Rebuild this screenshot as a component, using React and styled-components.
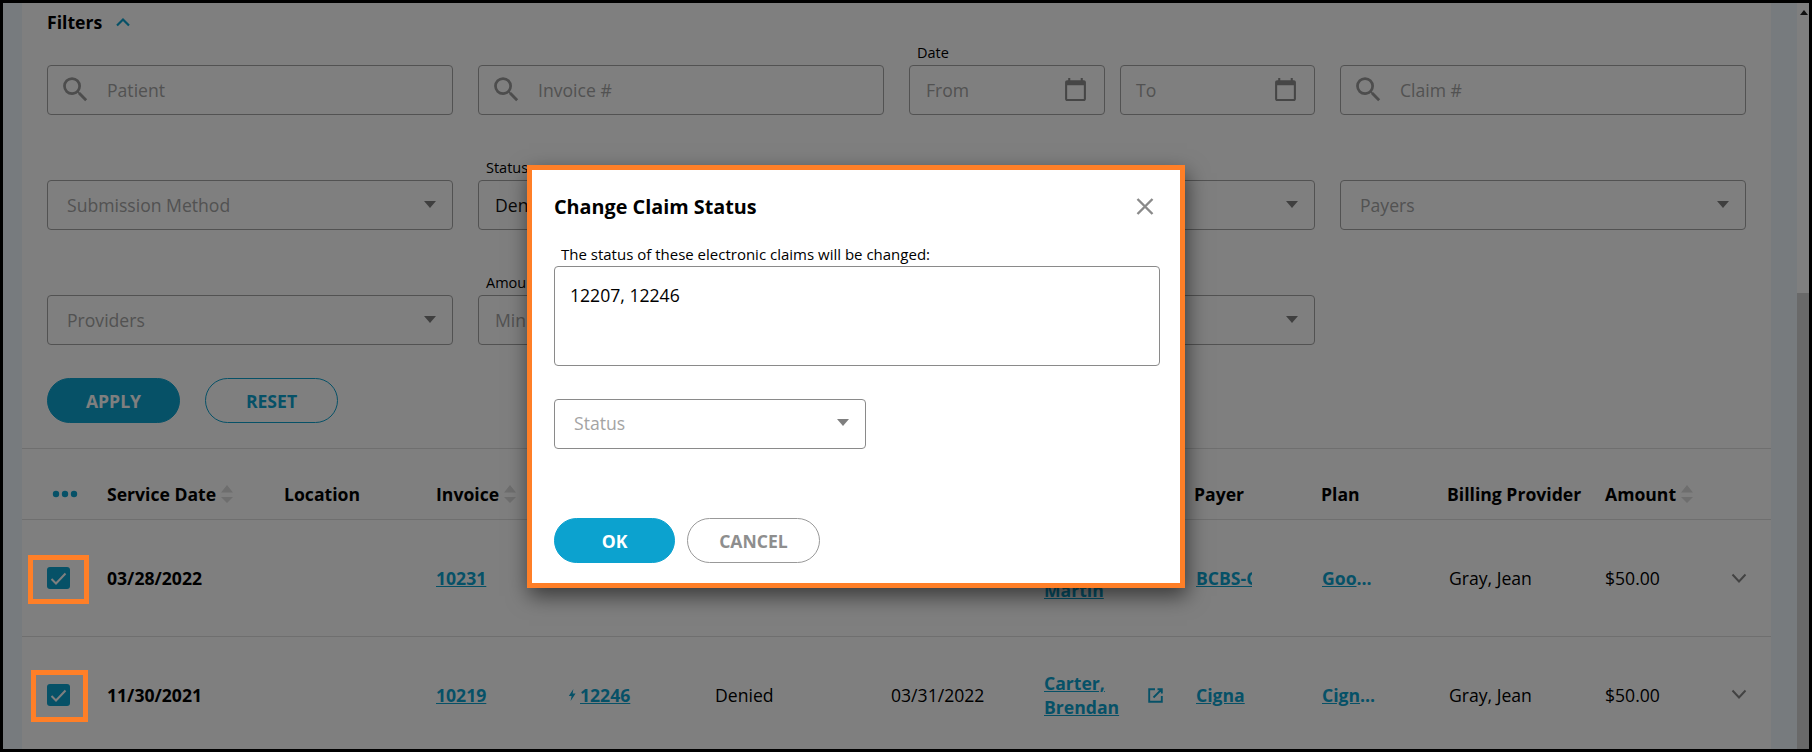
import React from 'react'
import styled, { createGlobalStyle } from 'styled-components'

const GlobalStyle = createGlobalStyle`
  html, body {
    margin: 0;
    padding: 0;
    background: #000;
  }
  * {
    box-sizing: border-box;
  }
`

const TEAL = '#0ca2cf'
const FONT = '"Open Sans", "Noto Sans", sans-serif'

const Frame = styled.div`
  position: relative;
  width: 1812px;
  height: 752px;
  border: 3px solid #000;
  overflow: hidden;
  display: flex;
  background: #fff;
  font-family: ${FONT};
  font-size: 17.6px;
  color: #000;
`

const SideStrip = styled.div`
  flex: 0 0 ${p => p.$width}px;
  background: #eef6fc;
`

const Main = styled.main`
  flex: 0 0 1749px;
  overflow: hidden;
`

const Scrollbar = styled.div`
  flex: 0 0 12px;
  display: flex;
  flex-direction: column;
  padding-top: 7px;
`

const ScrollArrow = styled.span`
  align-self: flex-end;
  margin-right: 1px;
  width: 0;
  height: 0;
  border-left: 4px solid transparent;
  border-right: 4px solid transparent;
  border-bottom: 5px solid #222;
`

const ScrollThumb = styled.div`
  margin-top: auto;
  height: 456px;
  background: #d2d2d2;
`

const FilterHead = styled.div`
  height: 41px;
  padding: 7px 0 0 25px;
  display: flex;
  align-items: flex-start;
  gap: 12px;
  line-height: 24px;
  font-weight: 700;
`

const FilterChevron = styled.svg`
  width: 18px;
  height: 12px;
  margin-top: 6px;
  fill: none;
  stroke: ${TEAL};
  stroke-width: 2.2;
`

const FilterGrid = styled.div`
  display: grid;
  grid-template-columns: repeat(4, 406px);
  column-gap: 25px;
  row-gap: 44px;
  padding-left: 25px;
`

const Cell = styled.div`
  min-height: 71px;
  display: flex;
  flex-direction: column;
  justify-content: flex-end;
`

const FieldLabel = styled.label`
  display: block;
  height: 18px;
  margin: 0 0 3px 8px;
  line-height: 18px;
  font-size: 14.5px;
`

const Pair = styled.div`
  display: grid;
  grid-template-columns: 196px 195px;
  column-gap: 15px;
`

const Field = styled.div`
  height: 50px;
  width: ${p => (p.$width ? `${p.$width}px` : 'auto')};
  display: flex;
  align-items: center;
  padding: 0 ${p => p.$right || 15}px ${p => p.$bottom || 1}px ${p => p.$left || 19}px;
  border: 1px solid ${p => p.$line || '#a4a4a4'};
  border-radius: 4px;
  background: #fff;
  color: ${p => (p.$filled ? '#111' : '#a4a4a4')};
`

const FieldText = styled.span`
  flex: 1;
  white-space: nowrap;
`

const SearchIcon = styled.svg`
  width: 33px;
  height: 33px;
  margin-right: 15px;
  fill: #9a9a9a;
`

const CalendarIcon = styled.svg`
  width: 25px;
  height: 25px;
  fill: #8c8c8c;
`

const Caret = styled.span`
  width: 0;
  height: 0;
  margin-right: 1px;
  border-left: 6px solid transparent;
  border-right: 6px solid transparent;
  border-top: 7px solid #7f7f7f;
`

const ButtonRow = styled.div`
  display: flex;
  gap: ${p => p.$gap}px;
  padding-left: ${p => p.$inset}px;
  margin-top: ${p => p.$top}px;
`

const Pill = styled.button`
  width: ${p => p.$width}px;
  height: 45px;
  padding: 0;
  border-radius: 23px;
  border: 1px solid ${p => p.$line};
  background: ${p => p.$fill || '#fff'};
  color: ${p => p.$ink};
  font-family: ${FONT};
  font-size: 17.6px;
  font-weight: 700;
`

const Rule = styled.div`
  height: 1px;
  margin-top: 25px;
  background: #dedede;
`

const columns = '60px 177px 152px 132px 147px 176px 153px 150px 127px 126px 158px 126px 40px'

const HeaderRow = styled.div`
  display: grid;
  grid-template-columns: ${columns};
  align-items: center;
  height: 71px;
  padding: 19px 0 0 25px;
  border-bottom: 1px solid #dedede;
  font-weight: 700;
`

const HeadCell = styled.div`
  display: flex;
  align-items: center;
  gap: 5px;
  white-space: nowrap;
`

const Dots = styled.svg`
  width: 26px;
  height: 8px;
  margin-left: 5px;
  fill: ${TEAL};
`

const SortIcon = styled.svg`
  width: 12px;
  height: 18px;
  fill: #dcdcdc;
`

const Row = styled.div`
  display: grid;
  grid-template-columns: ${columns};
  align-items: center;
  height: 117px;
  padding-left: 25px;
  border-bottom: 1px solid #dedede;
`

const CheckCell = styled.div`
  position: relative;
  width: 23px;
  height: 22px;
`

const Checkbox = styled.div`
  width: 23px;
  height: 22px;
  border-radius: 3px;
  background: ${TEAL};
  display: flex;
  align-items: center;
  justify-content: center;
`

const CheckMark = styled.svg`
  width: 17px;
  height: 13px;
  fill: none;
  stroke: #fff;
  stroke-width: 2;
`

// orange marks from the annotated screenshot, they sit above the dimmed layer
const Marker = styled.span`
  position: absolute;
  z-index: 20;
  left: ${p => p.$left}px;
  top: ${p => p.$top}px;
  width: ${p => p.$width}px;
  height: ${p => p.$height}px;
  border: 5px solid #ff7f27;
`

const DateText = styled.span`
  font-weight: 700;
`

const Inset = styled.div`
  padding-left: ${p => p.$left}px;
`

const TableLink = styled.a`
  display: ${p => (p.$clip ? 'inline-block' : 'inline')};
  max-width: ${p => (p.$clip ? `${p.$clip}px` : 'none')};
  overflow: ${p => (p.$clip ? 'hidden' : 'visible')};
  text-overflow: ${p => (p.$ellipsis ? 'ellipsis' : 'clip')};
  white-space: ${p => (p.$clip ? 'nowrap' : 'normal')};
  vertical-align: bottom;
  color: ${TEAL};
  font-weight: 700;
  text-decoration: underline;
`

const ClaimCell = styled.div`
  display: flex;
  align-items: center;
  gap: 4px;
`

const BoltIcon = styled.svg`
  width: 8px;
  height: 12px;
  fill: ${TEAL};
`

const NameCell = styled.div`
  display: flex;
  align-items: center;
  line-height: 24px;
`

const NameText = styled.div`
  width: 104px;
`

const ExternalIcon = styled.svg`
  width: 15px;
  height: 15px;
  fill: none;
  stroke: ${TEAL};
  stroke-width: 1.9;
`

const Chevron = styled.svg`
  width: 16px;
  height: 10px;
  margin-top: ${p => p.$nudge || 0}px;
  fill: none;
  stroke: #868686;
  stroke-width: 2;
`

const Dimmer = styled.div`
  position: absolute;
  inset: 0;
  z-index: 10;
  background: rgba(0, 0, 0, 0.5);
  padding: 162px 0 0 524px;
`

const Modal = styled.section`
  width: 658px;
  height: 423px;
  padding: 23px 20px 0 22px;
  border: 5px solid #ff7f27;
  background: #fff;
  box-shadow: 2px 8px 20px rgba(0, 0, 0, 0.55);
`

const ModalHead = styled.header`
  display: flex;
  align-items: center;
  justify-content: space-between;
  height: 26px;
  padding-right: 6px;
`

const ModalTitle = styled.h2`
  margin: 0;
  font-size: 19.8px;
  font-weight: 700;
`

const CloseIcon = styled.svg`
  width: 18px;
  height: 17px;
  fill: none;
  stroke: #8a8a8a;
  stroke-width: 2.4;
`

const ModalLabel = styled.div`
  height: 18px;
  margin: 26px 0 3px 7px;
  line-height: 18px;
  font-size: 15px;
`

const ClaimList = styled.div`
  height: 100px;
  padding: 16px 15px;
  border: 1px solid #8a8a8a;
  border-radius: 4px;
  line-height: 24px;
`

const StatusWrap = styled.div`
  margin-top: 33px;
`

const Search = () => (
  <SearchIcon viewBox="0 0 24 24">
    <path d="M15.5 14h-.79l-.28-.27A6.47 6.47 0 0 0 16 9.5 6.5 6.5 0 1 0 9.5 16c1.61 0 3.09-.59 4.23-1.57l.27.28v.79l5 4.99L20.49 19l-4.99-5zm-6 0C7.01 14 5 11.99 5 9.5S7.01 5 9.5 5 14 7.01 14 9.5 11.99 14 9.5 14z" />
  </SearchIcon>
)

const Calendar = () => (
  <CalendarIcon viewBox="0 0 24 24">
    <path d="M20 3h-1V1h-2v2H7V1H5v2H4c-1.1 0-2 .9-2 2v16c0 1.1.9 2 2 2h16c1.1 0 2-.9 2-2V5c0-1.1-.9-2-2-2zm0 18H4V8h16v13z" />
  </CalendarIcon>
)

const Sort = () => (
  <SortIcon viewBox="0 0 12 18">
    <path d="M6 0l6 7.5H0zM0 12h12l-6 6z" />
  </SortIcon>
)

const SearchField = ({ text }) => (
  <Cell>
    <Field $left={11}>
      <Search />
      <FieldText>{text}</FieldText>
    </Field>
  </Cell>
)

const SelectField = ({ text, label, filled }) => (
  <Cell>
    {label && <FieldLabel>{label}</FieldLabel>}
    <Field $filled={filled} $left={filled ? 16 : 19}>
      <FieldText>{text}</FieldText>
      <Caret />
    </Field>
  </Cell>
)

const rows = [
  {
    date: '03/28/2022',
    invoice: '10231',
    claim: '12207',
    name: [' ', 'Martin'],
    payer: 'BCBS-CA',
    plan: 'Good Health',
    marker: { left: -19, top: -12, width: 61, height: 49 },
  },
  {
    date: '11/30/2021',
    invoice: '10219',
    claim: '12246',
    sent: '03/31/2022',
    name: ['Carter,', 'Brendan'],
    payer: 'Cigna',
    plan: 'Cigna PPO',
    external: true,
    nudge: -2,
    marker: { left: -16, top: -14, width: 57, height: 52 },
  },
]

const App = () => (
  <>
    <GlobalStyle />
    <Frame>
      <SideStrip $width={19} />
      <Main>
        <FilterHead>
          Filters
          <FilterChevron viewBox="0 0 18 12">
            <path d="M3 9.5l6-6 6 6" />
          </FilterChevron>
        </FilterHead>
        <FilterGrid>
          <SearchField text="Patient" />
          <SearchField text="Invoice #" />
          <Cell>
            <FieldLabel>Date</FieldLabel>
            <Pair>
              <Field $left={16} $right={16}>
                <FieldText>From</FieldText>
                <Calendar />
              </Field>
              <Field $left={15} $right={16}>
                <FieldText>To</FieldText>
                <Calendar />
              </Field>
            </Pair>
          </Cell>
          <SearchField text="Claim #" />

          <SelectField text="Submission Method" />
          <SelectField text="Denied" label="Status" filled />
          <SelectField text="Locations" />
          <SelectField text="Payers" />

          <SelectField text="Providers" />
          <Cell>
            <FieldLabel>Amount</FieldLabel>
            <Pair>
              <Field $left={16}>
                <FieldText>Min</FieldText>
              </Field>
              <Field $left={16}>
                <FieldText>Max</FieldText>
              </Field>
            </Pair>
          </Cell>
          <SelectField text="Plans" />
        </FilterGrid>

        <ButtonRow $gap={25} $inset={25} $top={33}>
          <Pill $width={133} $fill={TEAL} $line={TEAL} $ink="#fff">APPLY</Pill>
          <Pill $width={133} $line={TEAL} $ink={TEAL}>RESET</Pill>
        </ButtonRow>
        <Rule />

        <HeaderRow>
          <Dots viewBox="0 0 26 8">
            <circle cx="4" cy="4" r="3.2" />
            <circle cx="13" cy="4" r="3.2" />
            <circle cx="22" cy="4" r="3.2" />
          </Dots>
          <HeadCell>Service Date <Sort /></HeadCell>
          <HeadCell>Location</HeadCell>
          <HeadCell>Invoice <Sort /></HeadCell>
          <HeadCell>Claim</HeadCell>
          <HeadCell>Status</HeadCell>
          <HeadCell>Sent</HeadCell>
          <HeadCell>Patient</HeadCell>
          <HeadCell>Payer</HeadCell>
          <HeadCell>Plan</HeadCell>
          <HeadCell>Billing Provider</HeadCell>
          <HeadCell>Amount <Sort /></HeadCell>
          <span />
        </HeaderRow>

        {rows.map(row => (
          <Row key={row.invoice}>
            <CheckCell>
              <Checkbox>
                <CheckMark viewBox="0 0 17 13">
                  <path d="M1.5 7l4.5 4.5L15.5 1.5" />
                </CheckMark>
              </Checkbox>
              <Marker $left={row.marker.left} $top={row.marker.top} $width={row.marker.width} $height={row.marker.height} />
            </CheckCell>
            <DateText>{row.date}</DateText>
            <span />
            <div><TableLink>{row.invoice}</TableLink></div>
            <ClaimCell>
              <BoltIcon viewBox="0 0 8 12">
                <path d="M5.4 0L.8 7h2.8L2.6 12 7.6 4.6H4.6z" />
              </BoltIcon>
              <TableLink>{row.claim}</TableLink>
            </ClaimCell>
            <span>Denied</span>
            <span>{row.sent}</span>
            <NameCell>
              <NameText>
                <TableLink>{row.name[0]}<br />{row.name[1]}</TableLink>
              </NameText>
              {row.external && (
                <ExternalIcon viewBox="0 0 15 15">
                  <path d="M7 1.2H1.2v12.6h12.6V8M13.8 1.2L5.5 9.5M9.5 1.2h4.3v4.3" />
                </ExternalIcon>
              )}
            </NameCell>
            <Inset $left={2}><TableLink $clip={56}>{row.payer}</TableLink></Inset>
            <Inset $left={1}><TableLink $clip={56} $ellipsis>{row.plan}</TableLink></Inset>
            <Inset $left={2}>Gray, Jean</Inset>
            <span>$50.00</span>
            <Chevron $nudge={row.nudge} viewBox="0 0 16 10">
              <path d="M1.5 1.5L8 8.5l6.5-7" />
            </Chevron>
          </Row>
        ))}
      </Main>
      <SideStrip $width={26} />
      <Scrollbar>
        <ScrollArrow />
        <ScrollThumb />
      </Scrollbar>

      <Dimmer>
        <Modal>
          <ModalHead>
            <ModalTitle>Change Claim Status</ModalTitle>
            <CloseIcon viewBox="0 0 18 17">
              <path d="M1.5 1l15 15M16.5 1l-15 15" />
            </CloseIcon>
          </ModalHead>
          <ModalLabel>The status of these electronic claims will be changed:</ModalLabel>
          <ClaimList>12207, 12246</ClaimList>
          <StatusWrap>
            <Field $width={312} $bottom={3} $line="#8a8a8a">
              <FieldText>Status</FieldText>
              <Caret />
            </Field>
          </StatusWrap>
          <ButtonRow $gap={12} $inset={0} $top={69}>
            <Pill $width={121} $fill={TEAL} $line={TEAL} $ink="#fff">OK</Pill>
            <Pill $width={133} $line="#999" $ink="#8e8e8e">CANCEL</Pill>
          </ButtonRow>
        </Modal>
      </Dimmer>
    </Frame>
  </>
)

export default App
